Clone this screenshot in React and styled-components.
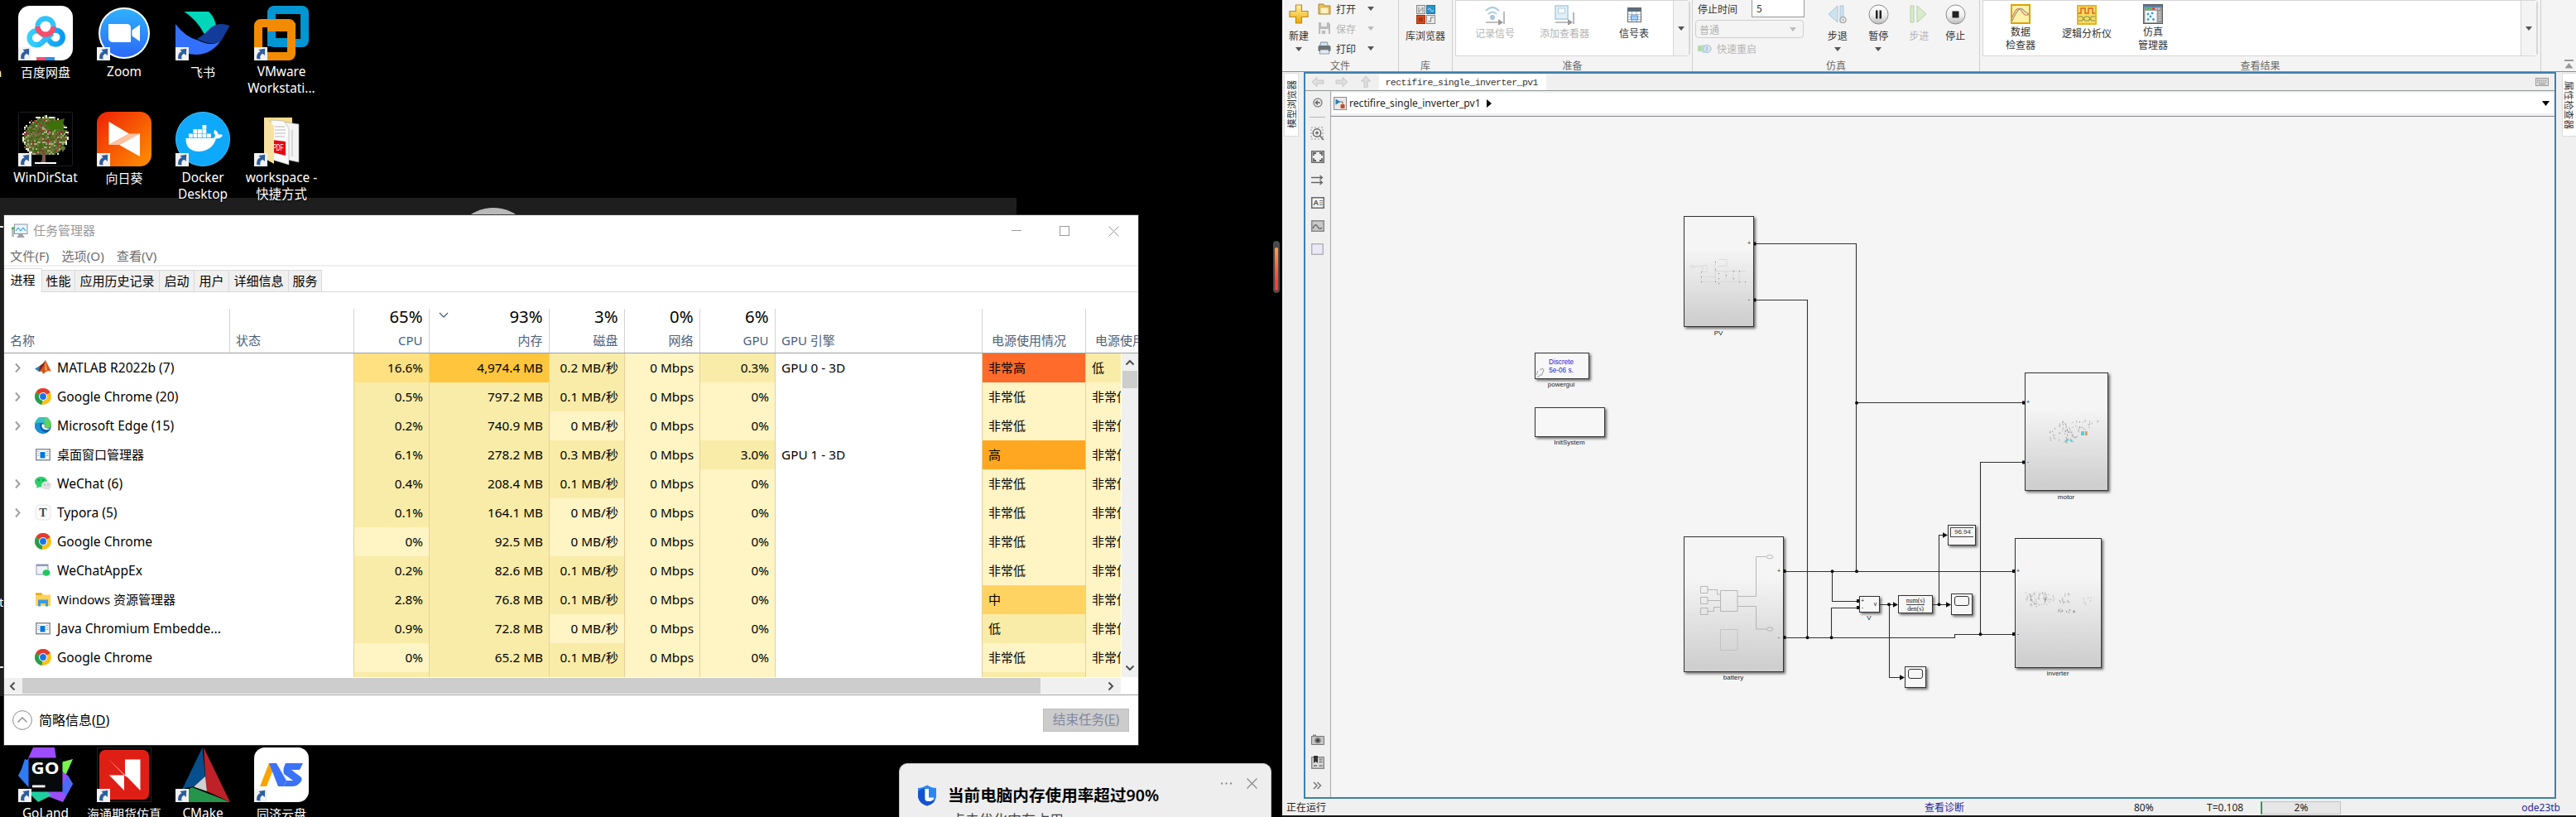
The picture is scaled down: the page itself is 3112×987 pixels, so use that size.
import React from 'react';
import styled, { createGlobalStyle, css } from 'styled-components';

const Global = createGlobalStyle`
  * { box-sizing: border-box; }
  body { margin: 0; background: #000; overflow: hidden; }
  svg { display: block; flex: none; }
`;

const UI = `'Noto Sans', 'Noto Sans CJK SC', sans-serif`;
const CJK = `'Noto Sans CJK SC', 'Noto Sans', sans-serif`;

const Screen = styled.div`
  display: flex;
  width: 3112px;
  height: 987px;
  overflow: hidden;
  font-family: ${UI};
  background: #000;
  white-space: nowrap;
`;

/* ------------------------------ Desktop ------------------------------ */

const Desktop = styled.div`
  position: relative;
  flex: none;
  width: 1549px;
  height: 987px;
  background: #000;
  overflow: hidden;
`;

const Wallpaper = styled.div`
  position: absolute;
  left: 0;
  top: 239px;
  width: 1228px;
  height: 602px;
  overflow: hidden;
  background: #1e1e1e;
`;

const Moon = styled.div`
  position: absolute;
  left: 545px;
  top: 12px;
  width: 102px;
  height: 102px;
  border-radius: 50%;
  background: #b9b9b9;
`;

const Streak = styled.div`
  position: absolute;
  left: 0;
  top: ${(p) => p.$y}px;
  width: 5px;
  height: 2px;
  background: #e8e8e8;
`;

const CutLabel = styled.div`
  position: absolute;
  left: ${(p) => p.$x}px;
  top: ${(p) => p.$y}px;
  font-size: 15px;
  line-height: 20px;
  color: ${(p) => p.$c || '#fff'};
`;

const IconGrid = styled.div`
  position: relative;
  display: grid;
  grid-template-columns: repeat(4, 95px);
  grid-template-rows: 128px 768px 128px;
  padding: 7px 0 0 7.5px;
`;

const Shortcut = styled.div`
  display: flex;
  flex-direction: column;
  align-items: center;
`;

const ShortcutText = styled.div`
  margin-top: 4px;
  font-size: ${(p) => (p.$cjk ? 15 : 15.4)}px;
  line-height: 20px;
  color: #fff;
  text-align: center;
  text-shadow: 0 1px 2px #000;
  white-space: pre;
`;

const Arrow = () => (
  <g>
    <rect x="0" y="50" width="16" height="16" fill="#f2f2f2" />
    <path d="M3.2 64 C3 58.5 4.6 56 7.6 55.2 L5.4 52.9 L13.2 51.7 L12.9 60 L10.4 57.8 C7.6 59 6.8 61 7.6 64.6 Z" fill="#2f5d9e" />
  </g>
);

const Tree = () => {
  const dots = [];
  let s = 7;
  const rnd = () => ((s = (s * 16807) % 2147483647) / 2147483647);
  const colors = ['#5f6a2e', '#3c6b12', '#7b7f45', '#8c3535', '#3c6b12', '#6e6e3a', '#a9a97c', '#5f6a2e'];
  for (let y = 0; y < 24; y++) {
    for (let x = 0; x < 28; x++) {
      const dx = (x - 13.5) / 14;
      const dy = (y - 13) / 13;
      const d = dx * dx + dy * dy;
      if (d < 0.78 || (d < 1.02 && rnd() > 0.35)) {
        dots.push(
          <rect key={`${x}-${y}`} x={5 + x * 2} y={4 + y * 2} width="2" height="2"
            fill={d > 0.84 && rnd() > 0.45 ? '#ecece2' : colors[Math.floor(rnd() * colors.length)]} />
        );
      }
    }
  }
  return (
    <g>
      <rect x="0.5" y="0.5" width="65" height="65" rx="1" fill="#000" stroke="#1d1d1d" />
      <path d="M20 61 h26 v2 h-26z" fill="#fff" />
      <path d="M29 44 h4 v17 h-6 l2-3z" fill="#7a5a50" />
      {dots}
      <path d="M34 14 l22 -6 l-4 14 l-6 -2 l-6 6z" fill="#3c7008" />
    </g>
  );
};

const art = {
  baidu: (
    <g>
      <defs>
        <linearGradient id="bd" x1="0" x2="1"><stop offset="0" stopColor="#35d0ff" /><stop offset="1" stopColor="#0a9bf5" /></linearGradient>
      </defs>
      <rect width="66" height="66" rx="14" fill="#fff" />
      <path d="M28 44.5 a8.5 8.5 0 1 1 0-12.5 l10 10 a8.5 8.5 0 1 0 0-9" transform="translate(0 0.5)" fill="none" stroke="url(#bd)" strokeWidth="6.5" />
      <path d="M28 45 L41 33" stroke="#2bbcfb" strokeWidth="6.5" />
      <path d="M23.5 25 a9.5 9.5 0 0 1 19 0" fill="none" stroke="#31c4fb" strokeWidth="6.4" />
      <path d="M23.5 25 a9.5 9.5 0 0 0 19 0" fill="none" stroke="#fb4d6c" strokeWidth="6.4" />
      <circle cx="33" cy="25" r="6.3" fill="#fff" />
      <rect x="22" y="62" width="11" height="4" fill="#fb4d6c" />
      <rect x="33" y="62" width="11" height="4" fill="#2d8cf0" />
    </g>
  ),
  zoom: (
    <g>
      <defs>
        <linearGradient id="zm" x1="0" x2="0" y1="0" y2="1"><stop offset="0" stopColor="#2fb0fb" /><stop offset="1" stopColor="#2b68f8" /></linearGradient>
      </defs>
      <circle cx="33" cy="33" r="31" fill="#fff" />
      <circle cx="33" cy="33" r="29" fill="url(#zm)" />
      <path d="M14 22 h22 q5 0 5 5 v17 h-21 q-6 0 -6 -6z" fill="#fff" />
      <path d="M42.500 29.500 l9.500 -6.500 v20 l-9.500 -6.500z" fill="#fff" />
    </g>
  ),
  feishu: (
    <g>
      <path d="M10.500 7 H40 q7 6 9 17 l-14 10.500 Q26 17 10.500 7z" fill="#00d6b9" />
      <path d="M0 22 Q12 38 28 42 Q44 50 55 42 Q44 58 26 59 Q10 59 0 50z" fill="#3370ff" />
      <path d="M26 40 Q36 34 42 27 Q52 19 65.500 24 Q60 34 56 41 Q46 50 26 40z" fill="#133c9a" />
    </g>
  ),
  vmware: (
    <g fill="none">
      <rect x="21" y="5" width="40" height="40" rx="3" stroke="#0095d3" strokeWidth="10" />
      <rect x="5" y="21" width="40" height="40" rx="3" stroke="#f38b00" strokeWidth="10" />
      <path d="M21 30 V44 H40" stroke="#0095d3" strokeWidth="10" />
      <path d="M16 26 H45 V32" stroke="#f38b00" strokeWidth="10" />
    </g>
  ),
  tree: <Tree />,
  sunflower: (
    <g>
      <defs>
        <linearGradient id="sf" x1="0" y1="0" x2="1" y2="1"><stop offset="0" stopColor="#ef2006" /><stop offset="1" stopColor="#ff9300" /></linearGradient>
      </defs>
      <rect width="66" height="66" rx="14" fill="url(#sf)" />
      <path d="M14.500 12 L39 26.500 L14.500 40z" fill="#fff" />
      <path d="M52 54 L27 40 L52 26z" fill="#fff" />
      <path d="M14.500 40 L39 26.500 H52 L27 40z" fill="#ffc1a1" />
    </g>
  ),
  docker: (
    <g>
      <circle cx="33" cy="33" r="32.500" fill="#0fa9fb" stroke="#48bdfb" />
      <path d="M12.500 32 H44 q4 0 4-4 q-3-3 -0.500-6 q4 2 4 5.500 q3-1 5.500 1 q-2 4-8 4 Q44 48 28 48 Q12 47 12.500 32z" fill="#fff" />
      <g fill="#fff">
        {[16, 21.5, 27, 32.5, 38].map((x) => <rect key={x} x={x} y="26.500" width="4.800" height="4.800" />)}
        {[21.5, 27, 32.5].map((x) => <rect key={x} x={x} y="21.200" width="4.800" height="4.800" />)}
        <rect x="32.500" y="16" width="4.800" height="4.800" />
      </g>
    </g>
  ),
  folder: (
    <g>
      <path d="M12 7 H46 V50 H12z" fill="#f6dc8c" />
      <path d="M34 12 L54 15 V61 L40 58z" fill="#f4f4f4" stroke="#999" strokeWidth="0.600" />
      <path d="M20 10 L36 11 L42 20 V64 L22 58z" fill="#fafafa" stroke="#aaa" strokeWidth="0.600" />
      <path d="M25 18 h12 M25 22 h13 M25 26 h13 M25 30 h12 M46 22 v32" stroke="#bbb" />
      <path d="M22 34 L38 36 V53 L22 49z" fill="#e50914" />
      <text x="22.500" y="47" fontSize="10.500" fill="#fff" fontFamily="Liberation Sans" textLength="13" lengthAdjust="spacingAndGlyphs">PDF</text>
      <path d="M12 7 L24 17 V63 L12 56z" fill="#f9e2a0" />
    </g>
  ),
  goland: (
    <g>
      <path d="M18 0 L44 0 L46 14 L30 26 L8 22z" fill="#9b4dff" />
      <path d="M8 14 L24 20 L14 50 L0 34 L4 26z" fill="#2d7bf6" />
      <path d="M44 20 L66 14 L58 32 L50 36z" fill="#79f24e" />
      <path d="M52 28 L60 34 L66 44 L54 66 L28 56z" fill="#9a4ff8" />
      <path d="M60 34 L66 44 L58 58 L50 50z" fill="#4b6bf8" />
      <path d="M14 50 L34 52 L40 58 L24 66 L16 58z" fill="#1fd0a0" />
      <rect x="12.500" y="12.500" width="41" height="41" fill="#060a0c" />
      <text x="15.500" y="32" fontSize="19" fontWeight="bold" fill="#fff" fontFamily="Open Sans" textLength="34" lengthAdjust="spacingAndGlyphs">GO</text>
      <rect x="17" y="45.500" width="15.500" height="2.800" fill="#fff" />
    </g>
  ),
  haitong: (
    <g>
      <rect x="0.500" y="0.500" width="65" height="65" fill="#000" stroke="#222" />
      <rect x="3" y="3" width="60" height="60" rx="7" fill="#df1f16" />
      <path d="M14 14 L34 33.500 V14.500 H52.500 V52 L37 36 L33 33.500 V52 L15 33.500 H33z" fill="#fff" />
    </g>
  ),
  cmake: (
    <g>
      <path d="M32.500 0 L36 36 L22 47 L12 49 Q8 52 6 55z" fill="#064f8c" />
      <path d="M34 0 L66 66 L38 53 L36 33z" fill="#be2128" />
      <path d="M20 48 L66 66 H0 V60z" fill="#24954a" />
      <path d="M36 35 L38 53 L22 47.500z" fill="#d0d0d0" />
    </g>
  ),
  tongji: (
    <g>
      <rect width="66" height="66" rx="13" fill="#fff" />
      <path d="M7 47 L18 19 H26 L15 47z" fill="#f9a400" />
      <path d="M18 19 H27 L39 40 L36 47 H29z" fill="#3b73f7" />
      <path d="M36 47 L39 40 H47 L36 32 Q34 27 38 19 H59 L55 27 H45 L57 36 Q59 40 54 44 Q51 47 46 47z" fill="#3b73f7" />
    </g>
  ),
};

const shortcuts = [
  ['baidu', '百度网盘', 1], ['zoom', 'Zoom'], ['feishu', '飞书', 1], ['vmware', 'VMware\nWorkstati...'],
  ['tree', 'WinDirStat'], ['sunflower', '向日葵', 1], ['docker', 'Docker\nDesktop'], ['folder', 'workspace -\n快捷方式'],
  ['goland', 'GoLand'], ['haitong', '海通期货仿真', 1], ['cmake', 'CMake'], ['tongji', '同济云盘', 1],
];

/* --------------------------- Task manager --------------------------- */

const TaskWindow = styled.section`
  position: absolute;
  left: 4px;
  top: 259px;
  width: 1372px;
  height: 642px;
  display: flex;
  flex-direction: column;
  border: 1px solid #3a3638;
  background: #fff;
  color: #000;
`;

const TitleBar = styled.div`
  display: flex;
  align-items: center;
  height: 38px;
  padding-left: 8px;
  color: #999;
  font-size: 15px;
  line-height: 20px;
`;

const TitleText = styled.span`
  flex: 1;
  margin: -2px 0 0 6px;
`;

const WindowButton = styled.div`
  display: grid;
  place-items: center;
  width: ${(p) => p.$w || 58.5}px;
`;

const MenuBar = styled.div`
  display: flex;
  gap: 15px;
  height: 24px;
  padding: 0 0 0 7px;
  border-bottom: 2px solid #f0f0f0;
  font-size: 15.2px;
  line-height: 22px;
  color: #6d6d6d;
`;

const Tabs = styled.div`
  display: flex;
  align-items: flex-end;
  height: 31px;
  border-bottom: 1px solid #d9d9d9;
`;

const Tab = styled.div`
  width: ${(p) => p.$w}px;
  height: 26px;
  border: 1px solid #d9d9d9;
  border-left: 0;
  border-bottom: 0;
  background: #f0f0f0;
  font-size: 15px;
  line-height: 25px;
  text-align: center;
  ${(p) => p.$on && css`
    height: 29px;
    margin-bottom: -1px;
    background: #fff;
    line-height: 27px;
  `}
`;

const colWidths = '273px 150px 91px 145px 91px 91px 91px 250px 125px';

const HeaderRow = styled.div`
  display: grid;
  grid-template-columns: ${colWidths} 63px;
  height: 54px;
  margin-top: 20px;
  border-bottom: 1px solid #a0a0a0;
`;

const HeaderCell = styled.div`
  position: relative;
  display: flex;
  flex-direction: column;
  justify-content: flex-end;
  align-items: ${(p) => (p.$right ? 'flex-end' : 'flex-start')};
  padding: 0 ${(p) => (p.$right ? 7.5 : 0)}px 5px ${(p) => (p.$right ? 0 : p.$pad || 7)}px;
  overflow: hidden;
  border-right: 1px solid #d4d4d4;
  font-size: 15px;
  line-height: 20px;
  color: #4c607a;
  &:last-child { border-right: 0; }
`;

const Total = styled.div`
  margin-bottom: 5px;
  font-size: 20.3px;
  line-height: 27px;
  color: #000;
`;

const SortMark = styled.svg`
  position: absolute;
  left: 11px;
  top: 4px;
`;

const TableArea = styled.div`
  display: flex;
  height: 392px;
`;

const Rows = styled.div`
  width: 1349px;
  height: 391px;
  overflow: hidden;
`;

const Row = styled.div`
  display: grid;
  grid-template-columns: ${colWidths} 42px;
  height: 35px;
`;

const tones = {
  none: '#fff', light: '#fff4c4', mid: '#f9eca8', cpu: '#ffe182', mem: '#ffc53d',
  red: '#ff6b2b', orange: '#ffa720', amber: '#ffd362',
};

const Cell = styled.div`
  display: flex;
  align-items: center;
  justify-content: ${(p) => (p.$right ? 'flex-end' : 'flex-start')};
  padding: 0 ${(p) => (p.$right ? 7 : 0)}px 1px ${(p) => (p.$right ? 0 : 7)}px;
  overflow: hidden;
  background: ${(p) => tones[p.$tone || 'none']};
  border-right: ${(p) => (p.$edge ? '1px solid #e6d09a' : '0')};
  font-size: ${(p) => (p.$cjk ? 15 : 15.3)}px;
  line-height: 20px;
`;

const NameCell = styled(Cell)`
  padding: 0 0 1px 12px;
  font-size: ${(p) => (p.$cjk ? 15 : 15.6)}px;
`;

const Expander = styled.span`
  display: flex;
  width: 25px;
`;

const ProcessIcon = styled.span`
  display: grid;
  place-items: center;
  width: 20px;
  height: 20px;
  margin-right: 7px;
`;

const VScroll = styled.div`
  display: flex;
  flex-direction: column;
  align-items: center;
  justify-content: space-between;
  width: 20px;
  height: 391px;
  margin-left: 1px;
  padding: 7px 0;
  background: #f0f0f0;
`;

const VThumb = styled.div`
  width: 18px;
  height: 21px;
  margin: 6px 0 auto;
  background: #cdcdcd;
`;

const HScroll = styled.div`
  display: flex;
  align-items: center;
  width: 1349px;
  height: 19px;
  padding-left: 6px;
  background: #f0f0f0;
`;

const HThumb = styled.div`
  width: 1230px;
  height: 19px;
  margin: 0 81px 0 8px;
  background: #cdcdcd;
`;

const Footer = styled.div`
  display: flex;
  flex: 1;
  align-items: center;
  margin-top: 1px;
  padding: 0 11px 0 10px;
  border-top: 1px solid #a0a0a0;
  font-size: 16px;
  line-height: 22px;
`;

const FooterText = styled.span`
  flex: 1;
  margin-left: 8px;
  u { text-underline-offset: 2px; }
`;

const EndTask = styled.div`
  width: 104px;
  height: 28px;
  border: 1px solid #bfbfbf;
  background: #ccc;
  color: #8087a0;
  font-size: 15.6px;
  line-height: 25px;
  text-align: center;
`;

const Chrome = () => (
  <svg width="20" height="20" viewBox="0 0 20 20">
    <circle cx="10" cy="10" r="10" fill="#fbc116" />
    <path d="M10 10 L1.300 5 A10 10 0 0 0 8.500 19.900z" fill="#259f4a" />
    <path d="M10 10 L1.300 5 A10 10 0 0 1 18.700 5z" fill="#e33b2e" />
    <circle cx="10" cy="10" r="4.900" fill="#fff" />
    <circle cx="10" cy="10" r="3.900" fill="#1a73e8" />
  </svg>
);

const picto = {
  matlab: (
    <svg width="20" height="20" viewBox="0 0 20 20">
      <path d="M0 11.500 L6 8 L9 10.500 L5 15z" fill="#2f7fb8" />
      <path d="M6 8 Q10 6 13 1 Q12 8 9 14 L5 15z" fill="#7a2a1c" />
      <path d="M13 1 Q15 5 20 15 Q16 12 10 18 Q9 14 6 14 Q11 9 13 1z" fill="#d9541e" />
      <path d="M13 1 L15 14 L12 13z" fill="#f5a04a" />
    </svg>
  ),
  chrome: <Chrome />,
  edge: (
    <svg width="20" height="20" viewBox="0 0 20 20">
      <circle cx="10" cy="10" r="10" fill="#0c59a4" />
      <path d="M0 9 A10 10 0 0 1 20 9 Q20 13 15 13.500 Q11 13 12.500 10.500 Q12 7 8 7 Q3 6 0 9z" fill="#36c2c0" />
      <path d="M12 0.500 A10 10 0 0 1 20 9 Q20 13 15 13.500 Q11 13 12.500 10.500z" fill="#63d455" />
      <path d="M0 10 Q2 6 7.500 6.500 Q5 11 8 15 Q10 18 14 18.500 Q8 22 3 17 Q0 14 0 10z" fill="#1b8fd8" />
      <path d="M8.500 9 Q9.500 7.500 11.500 8.800 Q12.500 10 11.500 12 Q13 14.500 19 13.500 Q17 15.500 13 15.200 Q7.500 13.500 8.500 9z" fill="#fff" />
    </svg>
  ),
  app: (
    <svg width="18" height="15" viewBox="0 0 18 15">
      <rect x="0.750" y="0.750" width="16.500" height="13" fill="#fff" stroke="#8a8d94" strokeWidth="1.500" />
      <rect x="5.500" y="4" width="6" height="7.500" fill="#0078d7" />
      <path d="M2.500 3.500h2M2.500 6h2M2.500 8.500h2M12.500 3.500h3M12.500 6h3M12.500 8.500h3" stroke="#999" strokeWidth="0.900" />
    </svg>
  ),
  wechat: (
    <svg width="20" height="20" viewBox="0 0 20 20">
      <ellipse cx="7.500" cy="8" rx="7.500" ry="6.300" fill="#2bcf6a" />
      <path d="M2 16 l1-4 3 2z" fill="#2bcf6a" />
      <ellipse cx="14" cy="12.500" rx="6" ry="5" fill="#e2e2e2" />
      <path d="M18 18.500 l-0.500-3 -2.500 1.500z" fill="#e2e2e2" />
      <circle cx="5" cy="6" r="0.900" fill="#157a3c" /><circle cx="10" cy="6" r="0.900" fill="#157a3c" />
      <circle cx="12" cy="11.500" r="0.700" fill="#888" /><circle cx="16" cy="11.500" r="0.700" fill="#888" />
    </svg>
  ),
  typora: (
    <svg width="20" height="20" viewBox="0 0 20 20">
      <rect x="1" y="1" width="18" height="18" rx="4" fill="#fbfbfb" stroke="#e6e6e6" />
      <text x="10" y="14.500" textAnchor="middle" fontSize="14" fontWeight="bold" fontFamily="Liberation Serif" fill="#444">T</text>
    </svg>
  ),
  wxapp: (
    <svg width="18" height="16" viewBox="0 0 18 16">
      <rect x="1" y="1" width="14" height="12" fill="#eef2fa" stroke="#8d9bb5" />
      <path d="M1 2h14" stroke="#8d9bb5" strokeWidth="2" />
      <ellipse cx="13" cy="11" rx="4.500" ry="3.800" fill="#1fc763" />
    </svg>
  ),
  explorer: (
    <svg width="20" height="17" viewBox="0 0 20 17">
      <path d="M1 0.500h7l1.500 2H19V16H1z" fill="#ffd35c" />
      <path d="M1 0.500h7l1.500 2H1z" fill="#e3a008" />
      <path d="M4 16.500V8.500h12v8h-3v-3.500H7v3.500z" fill="#3c9be0" />
    </svg>
  ),
};

const processes = [
  ['matlab', 'MATLAB R2022b (7)', 1, '16.6%', '4,974.4 MB', '0.2', '0.3%', 'GPU 0 - 3D', '非常高', '低'],
  ['chrome', 'Google Chrome (20)', 1, '0.5%', '797.2 MB', '0.1', '0%', '', '非常低', '非常低'],
  ['edge', 'Microsoft Edge (15)', 1, '0.2%', '740.9 MB', '0', '0%', '', '非常低', '非常低'],
  ['app', '桌面窗口管理器', 0, '6.1%', '278.2 MB', '0.3', '3.0%', 'GPU 1 - 3D', '高', '非常低'],
  ['wechat', 'WeChat (6)', 1, '0.4%', '208.4 MB', '0.1', '0%', '', '非常低', '非常低'],
  ['typora', 'Typora (5)', 1, '0.1%', '164.1 MB', '0', '0%', '', '非常低', '非常低'],
  ['chrome', 'Google Chrome', 0, '0%', '92.5 MB', '0', '0%', '', '非常低', '非常低'],
  ['wxapp', 'WeChatAppEx', 0, '0.2%', '82.6 MB', '0.1', '0%', '', '非常低', '非常低'],
  ['explorer', 'Windows 资源管理器', 0, '2.8%', '76.8 MB', '0.1', '0%', '', '中', '非常低'],
  ['app', 'Java Chromium Embedde...', 0, '0.9%', '72.8 MB', '0', '0%', '', '低', '非常低'],
  ['chrome', 'Google Chrome', 0, '0%', '65.2 MB', '0.1', '0%', '', '非常低', '非常低'],
];

const powerTone = { 非常高: 'red', 高: 'orange', 中: 'amber', 低: 'mid', 非常低: 'light' };

const Chevron = ({ d, w = 9, h = 13, c = '#a0a0a0', s = 2 }) => (
  <svg width={w} height={h} viewBox={`0 0 ${w} ${h}`}><path d={d} fill="none" stroke={c} strokeWidth={s} /></svg>
);

const ProcessRow = ({ p }) => {
  const [icon, name, group, cpu, mem, disk, gpu, engine, power, trend] = p;
  return (
    <Row>
      <NameCell $cjk={/[^\x20-\x7e]/.test(name)}>
        <Expander>{group ? <Chevron d="M2 1.500 L6.500 6.500 L2 11.500" /> : null}</Expander>
        <ProcessIcon>{picto[icon]}</ProcessIcon>
        {name}
      </NameCell>
      <Cell $edge />
      <Cell $right $edge $tone={cpu === '16.6%' ? 'cpu' : cpu === '0%' ? 'light' : 'mid'}>{cpu}</Cell>
      <Cell $right $edge $tone={mem.length > 9 ? 'mem' : 'mid'}>{mem}</Cell>
      <Cell $right $edge $tone={disk === '0' ? 'light' : 'mid'}>{disk} MB/秒</Cell>
      <Cell $right $edge $tone="light">0 Mbps</Cell>
      <Cell $right $edge $tone={gpu === '0%' ? 'light' : 'mid'}>{gpu}</Cell>
      <Cell $edge>{engine}</Cell>
      <Cell $edge $cjk $tone={powerTone[power]}>{power}</Cell>
      <Cell $cjk $tone={powerTone[trend]}>{trend}</Cell>
    </Row>
  );
};

const TaskManager = () => (
  <TaskWindow>
    <TitleBar>
      <svg width="21" height="18" viewBox="0 0 21 18">
        <path d="M1 4h3v12H1z" fill="#b9bec2" /><path d="M1 5h3v2H1z" fill="#39b54a" />
        <rect x="4.500" y="1" width="15.500" height="11.500" fill="#e7f6ff" stroke="#8b9499" />
        <path d="M6 9l3-4 3 4 3-4 3 4" fill="none" stroke="#1c8bd0" />
        <path d="M10 13h4l3 4H7z" fill="#9da3a7" />
      </svg>
      <TitleText>任务管理器</TitleText>
      <WindowButton><svg width="13" height="12"><path d="M0 5.500h12" stroke="#999" /></svg></WindowButton>
      <WindowButton><svg width="13" height="13"><rect x="0.500" y="0.500" width="11" height="11" fill="none" stroke="#999" /></svg></WindowButton>
      <WindowButton $w={59}><svg width="13" height="13"><path d="M0.500 0.500l12 12M12.500 0.500l-12 12" stroke="#999" /></svg></WindowButton>
    </TitleBar>
    <MenuBar><span>文件(F)</span><span>选项(O)</span><span>查看(V)</span></MenuBar>
    <Tabs>
      <Tab $w={46} $on>进程</Tab><Tab $w={40}>性能</Tab><Tab $w={102}>应用历史记录</Tab><Tab $w={42}>启动</Tab>
      <Tab $w={42}>用户</Tab><Tab $w={72}>详细信息</Tab><Tab $w={40}>服务</Tab>
    </Tabs>
    <HeaderRow>
      <HeaderCell>名称</HeaderCell>
      <HeaderCell>状态</HeaderCell>
      <HeaderCell $right><Total>65%</Total>CPU</HeaderCell>
      <HeaderCell $right>
        <SortMark width="13" height="9"><path d="M1 1l5 5 5-5" fill="none" stroke="#4c607a" strokeWidth="1.300" /></SortMark>
        <Total>93%</Total>内存
      </HeaderCell>
      <HeaderCell $right><Total>3%</Total>磁盘</HeaderCell>
      <HeaderCell $right><Total>0%</Total>网络</HeaderCell>
      <HeaderCell $right><Total>6%</Total>GPU</HeaderCell>
      <HeaderCell>GPU 引擎</HeaderCell>
      <HeaderCell $pad={11}>电源使用情况</HeaderCell>
      <HeaderCell $pad={11}>电源使用情况</HeaderCell>
    </HeaderRow>
    <TableArea>
      <Rows>
        {processes.map((p, i) => <ProcessRow key={i} p={p} />)}
        <Row>
          <Cell /><Cell $edge /><Cell $edge $tone="mid" /><Cell $edge $tone="mid" /><Cell $edge $tone="mid" />
          <Cell $edge $tone="light" /><Cell $edge $tone="light" /><Cell $edge /><Cell $edge $tone="mid" /><Cell $tone="light" />
        </Row>
      </Rows>
      <VScroll>
        <Chevron w={12} h={8} d="M1.500 6.500 L6 2 L10.500 6.500" c="#505050" />
        <VThumb />
        <Chevron w={12} h={8} d="M1.500 1.500 L6 6 L10.500 1.500" c="#505050" />
      </VScroll>
    </TableArea>
    <HScroll>
      <Chevron w={8} h={12} d="M6.500 1.500 L2 6 L6.500 10.500" c="#505050" />
      <HThumb />
      <Chevron w={8} h={12} d="M1.500 1.500 L6 6 L1.500 10.500" c="#505050" />
    </HScroll>
    <Footer>
      <svg width="24" height="24" viewBox="0 0 24 24"><circle cx="12" cy="12" r="11.400" fill="none" stroke="#8a8a8a" /><path d="M6.500 14.500 L12 9 L17.500 14.500" fill="none" stroke="#999" strokeWidth="1.600" /></svg>
      <FooterText>简略信息(<u>D</u>)</FooterText>
      <EndTask>结束任务(<u>E</u>)</EndTask>
    </Footer>
  </TaskWindow>
);

/* ------------------------------ Toast ------------------------------ */

const Toast = styled.aside`
  position: absolute;
  left: 1086px;
  top: 922px;
  width: 450px;
  height: 120px;
  display: flex;
  align-items: flex-start;
  padding: 0 16px 0 21px;
  border: 1px solid #c8c8c8;
  border-radius: 10px;
  background: #eee;
`;

const Shield = styled.svg`
  margin-top: 25px;
`;

const ToastBody = styled.div`
  flex: 1;
  margin: 24px 0 0 13px;
`;

const ToastTitle = styled.div`
  font-size: 19.6px;
  font-weight: 600;
  line-height: 28px;
  color: #000;
`;

const ToastText = styled.div`
  margin: 4px 0 0 4px;
  font-size: 17px;
  line-height: 24px;
  color: #444;
`;

const ToastTools = styled.div`
  display: flex;
  gap: 18px;
  align-items: center;
  margin-top: 17px;
`;

const SideHandle = styled.div`
  position: absolute;
  left: 1538px;
  top: 291px;
  width: 8px;
  height: 63px;
  padding: 8px 2px 3px;
  border-radius: 4px;
  background: #4a4a4a;
  &::before {
    content: '';
    display: block;
    height: 100%;
    border-radius: 2px;
    background: linear-gradient(#ff9f4c, #ff3c35 80%);
  }
`;

/* ------------------------------ Simulink ------------------------------ */

const Simulink = styled.div`
  display: flex;
  flex-direction: column;
  width: 1563px;
  height: 987px;
  background: #f0f0f0;
  font-family: ${CJK};
  font-size: 12px;
  color: #333;
`;

const Ribbon = styled.div`
  display: flex;
  height: 87px;
  border-bottom: 1px solid #8f8f8f;
  background: #f4f4f4;
`;

const Section = styled.div`
  display: flex;
  flex-direction: column;
  width: ${(p) => p.$w}px;
  border-right: 1px solid #cfcfcf;
`;

const SectionBody = styled.div`
  display: flex;
  height: 70px;
`;

const SectionLabel = styled.div`
  height: 16px;
  line-height: 17px;
  text-align: center;
  color: #6a6a6a;
`;

const BigButton = styled.div`
  display: flex;
  flex-direction: column;
  align-items: center;
  width: ${(p) => p.$w}px;
  padding-top: 4px;
  color: ${(p) => (p.$off ? '#b4b4b4' : '#333')};
`;

const BigIcon = styled.div`
  display: grid;
  place-items: center;
  height: 26px;
  margin-bottom: ${(p) => p.$gap ?? 5}px;
`;

const BigText = styled.div`
  line-height: 16px;
  margin-bottom: 6px;
  text-align: center;
  white-space: pre;
`;

const SmallList = styled.div`
  display: flex;
  flex-direction: column;
  margin-top: -2px;
`;

const SmallRow = styled.div`
  display: flex;
  align-items: center;
  height: 24.3px;
  padding-left: 3px;
  color: ${(p) => (p.$off ? '#b4b4b4' : '#333')};
`;

const SmallText = styled.span`
  width: ${(p) => p.$w || 38}px;
  margin-left: 6px;
`;

const Gallery = styled.div`
  display: flex;
  width: ${(p) => p.$w}px;
  height: 68px;
  margin: 0 0 0 3px;
  border: 1px solid #d6d6d6;
  border-width: 1px 2px 1px 1px;
  border-radius: 0 5px 5px 0;
  background: #fff;
`;

const GalleryItems = styled.div`
  display: flex;
  flex: 1;
  padding-left: 5px;
`;

const GalleryMore = styled.div`
  display: grid;
  place-items: center;
  width: 19px;
  border-left: 1px solid #d6d6d6;
  background: #f4f4f4;
`;

const SimForm = styled.div`
  display: flex;
  flex-direction: column;
  width: 150px;
`;

const FormRow = styled.div`
  display: flex;
  align-items: center;
  height: 21px;
  padding-left: 6px;
  color: ${(p) => (p.$off ? '#b4b4b4' : '#333')};
`;

const Field = styled.div`
  width: 64px;
  height: 21px;
  margin-left: 17px;
  padding-left: 5px;
  border: 1px solid #999;
  border-top: 0;
  background: #fff;
  line-height: 20px;
`;

const Select = styled.div`
  display: flex;
  align-items: center;
  justify-content: space-between;
  width: 131px;
  height: 22px;
  margin: 3px 0 2px 3px;
  padding: 0 8px 0 4px;
  border: 1px solid #cfcfcf;
  border-radius: 4px;
  color: #b4b4b4;
`;

const CollapseSlot = styled.div`
  display: flex;
  flex: 1;
  align-items: flex-end;
  justify-content: flex-end;
  padding: 0 3px 3px 0;
`;

const Main = styled.div`
  display: flex;
  height: 879px;
`;

const Rail = styled.div`
  display: flex;
  width: ${(p) => p.$w}px;
  padding: 1px 0 0 ${(p) => p.$pl}px;
`;

const RailTab = styled.div`
  display: grid;
  place-items: center;
  flex: none;
  width: 18px;
  height: 77px;
  border: 1px solid #dcdcdc;
  background: #fff;
  writing-mode: vertical-rl;
  text-orientation: sideways;
  font-size: 11.6px;
  line-height: 16px;
  transform: ${(p) => (p.$flip ? 'rotate(180deg)' : 'none')};
`;

const Editor = styled.div`
  display: flex;
  flex-direction: column;
  width: 1513px;
  height: 878px;
  border: 2px solid #3f80ad;
`;

const TabStrip = styled.div`
  display: flex;
  align-items: center;
  height: 21px;
  border-bottom: 1px solid #8e9693;
`;

const NavIcons = styled.div`
  display: flex;
  gap: 13px;
  width: 89px;
  padding-left: 7px;
`;

const ModelTab = styled.div`
  width: 202px;
  height: 20px;
  padding-left: 7.5px;
  background: #fff;
  font-family: 'Liberation Mono', monospace;
  font-size: 11.5px;
  letter-spacing: -0.54px;
  line-height: 21px;
  color: #333;
`;

const TabStripEnd = styled.div`
  margin: 0 7px 0 auto;
`;

const EditorBody = styled.div`
  display: flex;
  flex: 1;
`;

const Palette = styled.div`
  display: flex;
  flex-direction: column;
  align-items: center;
  width: 31px;
  padding: 0 1px 0 0;
  border-right: 1px solid #a9a9a9;
`;

const Tool = styled.div`
  display: grid;
  place-items: center;
  width: 28px;
  height: 28px;
`;

const ToolRule = styled.div`
  width: 19px;
  height: 1px;
  margin: 3px 0 5px;
  background: #b5b5b5;
`;

const Spacer = styled.div`
  flex: 1;
`;

const Work = styled.div`
  display: flex;
  flex: 1;
  flex-direction: column;
`;

const AddressBar = styled.div`
  display: flex;
  align-items: center;
  gap: 3px;
  height: 30px;
  padding: 0 4px 0 2px;
  border: solid #f0f0f0;
  border-width: 2px 2px 3px 1px;
  background: #fff;
  font-family: ${UI};
  font-size: 12.1px;
  line-height: 16px;
  color: #222;
`;

const AddressRule = styled.div`
  height: 1px;
  background: #85888f;
`;

const AddressName = styled.span`
  margin-right: 4px;
`;

const Canvas = styled.div`
  position: relative;
  flex: 1;
  overflow: hidden;
  background: #f5f5f5;
`;

const CX = 1608;
const CY = 141;

const Node = styled.div`
  position: absolute;
  left: ${(p) => p.$x - CX}px;
  top: ${(p) => p.$y - CY}px;
  width: ${(p) => p.$w}px;
  height: ${(p) => p.$h}px;
  border: 1px solid #333;
  background: ${(p) => (p.$shade ? 'linear-gradient(#f5f5f5 30%, #cfcfcf 95%)' : '#f7f7f7')};
  box-shadow: 2px 2px 3px rgba(0, 0, 0, 0.55);
`;

const NodeLabel = styled.div`
  position: absolute;
  left: ${(p) => p.$x - CX - 40}px;
  top: ${(p) => p.$y - CY - 6}px;
  width: 80px;
  font-family: 'Liberation Sans', sans-serif;
  font-size: 8px;
  line-height: 12px;
  text-align: center;
  color: #222;
`;

const PowerText = styled.div`
  padding: 6px 2px 0 0;
  font-family: 'Liberation Sans', sans-serif;
  font-size: 8.2px;
  line-height: 9.5px;
  text-align: center;
  color: #2a20d8;
`;

const Fraction = styled.div`
  display: flex;
  flex-direction: column;
  align-items: center;
  padding-top: 1px;
  font-family: 'Liberation Serif', serif;
  font-size: 7.9px;
  line-height: 9px;
  color: #222;
  span:first-child { border-bottom: 1px solid #444; }
`;

const Readout = styled.div`
  width: 28px;
  height: 12px;
  margin: 2px 0 0 2px;
  padding-right: 3px;
  border: 1px solid #444;
  border-right: 0;
  font-family: 'Liberation Sans', sans-serif;
  font-size: 8px;
  line-height: 10px;
  text-align: right;
  color: #333;
`;

const ScopeScreen = styled.div`
  width: 18px;
  height: 12px;
  margin: 2px auto 0;
  border: 1px solid #333;
  border-radius: 3px;
`;

const PortText = styled.div`
  position: absolute;
  left: ${(p) => p.$x - CX - 5}px;
  top: ${(p) => p.$y - CY - 5}px;
  width: 10px;
  font-family: 'Liberation Sans', sans-serif;
  font-size: 7px;
  line-height: 10px;
  text-align: center;
  color: #222;
`;

const Wires = styled.svg`
  position: absolute;
  left: 0;
  top: 0;
`;

const StatusBar = styled.div`
  display: flex;
  align-items: center;
  height: 19px;
  padding: 0 19px 0 5px;
  font-family: ${UI};
  line-height: 16px;
  color: #222;
`;

const StatusItem = styled.span`
  width: ${(p) => p.$w}px;
  color: ${(p) => (p.$link ? '#2a2a9e' : '#222')};
  text-align: ${(p) => (p.$end ? 'right' : 'left')};
`;

const Progress = styled.div`
  width: 97px;
  height: 16px;
  border: 1px solid #c4c4c4;
  border-left: 2px solid #25a244;
  background: #e6e6e6;
  line-height: 14px;
  text-align: center;
`;

const BottomEdge = styled.div`
  height: 2px;
  background: #1b1718;
`;

const Down = ({ c = '#555', w = 8 }) => (
  <svg width={w} height="5" viewBox="0 0 8 5"><path d="M0 0h8L4 5z" fill={c} /></svg>
);

const speckles = (seed, n, x0, y0, w, h, o) => {
  let s = seed;
  const rnd = () => ((s = (s * 16807) % 2147483647) / 2147483647);
  return Array.from({ length: n }, (_, i) => (
    <rect key={`${seed}-${i}`} x={x0 + rnd() * w} y={y0 + rnd() * h} width="1" height={1 + rnd() * 1.5} fill="#555" opacity={o} />
  ));
};

const dots = [[2243, 486.5], [2213.5, 690], [2243, 690], [2183.5, 770], [2212.5, 770], [2392.5, 766], [2282, 730], [2342.5, 730]];
const ports = [[2120, 294.5], [2120, 362.5], [2444.5, 486.5], [2444.5, 558.5], [2156, 690], [2156, 770], [2432.5, 690], [2432.5, 766], [2244.5, 726], [2244.5, 734]];
const heads = [[2293, 730], [2357, 730], [2353, 646], [2301, 818]];

const Diagram = () => (
  <Canvas>
    <Node $x={2034} $y={261} $w={85} $h={134} $shade />
    <Node $x={2446} $y={450} $w={101} $h={143} $shade />
    <Node $x={2034} $y={648} $w={121} $h={164} $shade />
    <Node $x={2434} $y={650} $w={105} $h={157} $shade />
    <Node $x={1854} $y={426} $w={66} $h={32}><PowerText>Discrete<br />5e-06 s.</PowerText></Node>
    <Node $x={1854} $y={492} $w={85} $h={36} />
    <Node $x={2246} $y={720} $w={25} $h={20} />
    <Node $x={2293} $y={719} $w={42} $h={22}><Fraction><span>num(s)</span><span>den(s)</span></Fraction></Node>
    <Node $x={2353} $y={634} $w={34} $h={25}><Readout>96.94</Readout></Node>
    <Node $x={2357} $y={717} $w={26} $h={26}><ScopeScreen /></Node>
    <Node $x={2301} $y={805} $w={26} $h={26}><ScopeScreen /></Node>
    <Wires width="1478" height="823" viewBox="1608 141 1478 823">
      <g fill="none" stroke="#333" strokeWidth="1.100">
        <path d="M2119 294.500H2242.500V690" />
        <path d="M2119 362.500H2183.500V770" />
        <path d="M2242.500 486.500H2446M2446 558.500H2392.500V766" />
        <path d="M2155 690.500H2434M2155 770.500H2361.500V766.500H2434" />
        <path d="M2213.500 690V726.500H2246M2212.500 770V734.500H2246" />
        <path d="M2271 730.500H2290M2335 730.500H2352M2342.500 730V646.500H2350M2282.500 730V818.500H2297" />
      </g>
      <g fill="#111">
        {dots.map(([x, y]) => <circle key={`${x},${y}`} cx={x} cy={y + 0.3} r="2" />)}
        {ports.map(([x, y]) => <rect key={`${x},${y}`} x={x - 1.5} y={y - 2} width="3" height="4" />)}
        {heads.map(([x, y]) => <path key={`${x},${y}`} d={`M${x} ${y + 0.5}l-6-3.200v6.400z`} />)}
      </g>
      <g fill="none" stroke="#a8a8a8" strokeWidth="0.800">
        <path d="M2054.500 708.500h8.500v8h-8.500zM2054.500 721.500h8.500v8h-8.500zM2054.500 734.500h8.500v8h-8.500zM2078.500 713.500h20.500v25h-20.500z" />
        <path d="M2063 712.500h11.500v5.500h4M2063 725.500h15.500M2063 738.500h7.500v-5h8M2099 720.500h22.500v-48h12M2099 732.500h22.500v27.500h12" />
        <ellipse cx="2138" cy="672.700" rx="4" ry="2.200" /><ellipse cx="2138" cy="760" rx="4" ry="2.200" />
        <path d="M2078.500 760.500h20.500v25h-20.500z" stroke="#bcbcbc" />
      </g>
      <g fill="none" stroke="#d6d6d6" strokeWidth="0.800">
        <path d="M2042 320.500h4v3h-4zM2046 322h11M2057 320.500h5v8h-5zM2076 313.500h10v8h-10M2072 316v25M2055 328v12.500h53M2055 334.500h18M2072 327.500h37M2085 327v13M2094 327v13M2101 327v13" />
      </g>
      {[[2055, 328], [2055, 334], [2055, 340], [2072, 316], [2072, 325], [2072, 340], [2076, 330], [2076, 336], [2085, 332], [2094, 327], [2094, 336], [2101, 327], [2101, 340], [2108, 340], [2076, 342]].map(([x, y], i) => (
        <rect key={i} x={x} y={y} width="1" height="1.200" fill="#888" />
      ))}
      {speckles(11, 24, 2476, 512, 22, 22, 0.4)}
      {speckles(17, 30, 2488, 508, 30, 14, 0.4)}
      {speckles(23, 20, 2495, 520, 14, 14, 0.4)}
      {speckles(29, 12, 2517, 507, 18, 12, 0.35)}
      {speckles(31, 60, 2447, 714, 26, 18, 0.35)}
      {speckles(41, 30, 2470, 716, 30, 12, 0.35)}
      {speckles(43, 18, 2486, 735, 26, 4, 0.45)}
      {speckles(47, 6, 2517, 721, 9, 8, 0.3)}
      <g fill="#4bd3d6"><rect x="2514" y="521" width="4" height="5" /><rect x="2495" y="531" width="2.500" height="2.500" /><rect x="2501" y="531" width="2.500" height="2.500" /></g>
      <rect x="2519" y="521" width="2.500" height="5" fill="#ee9040" />
      <path d="M1856 453l2-5M1860 447q4-3 5 0l-3 7M1857 455q3 1 4-3" stroke="#888" fill="none" strokeWidth="0.900" />
    </Wires>
    <PortText $x={2113} $y={294}>+</PortText><PortText $x={2113} $y={362}>-</PortText>
    <PortText $x={2450} $y={486}>+</PortText><PortText $x={2450} $y={558}>-</PortText>
    <PortText $x={2149} $y={690}>+</PortText><PortText $x={2149} $y={770}>-</PortText>
    <PortText $x={2438} $y={690}>+</PortText><PortText $x={2438} $y={766}>-</PortText>
    <PortText $x={2250} $y={726}>+</PortText><PortText $x={2250} $y={734}>-</PortText>
    <PortText $x={2265.5} $y={730}>v</PortText>
    <NodeLabel $x={2076} $y={402.5}>PV</NodeLabel>
    <NodeLabel $x={1886} $y={465}>powergui</NodeLabel>
    <NodeLabel $x={1896} $y={535}>InitSystem</NodeLabel>
    <NodeLabel $x={2496} $y={601}>motor</NodeLabel>
    <NodeLabel $x={2094} $y={819}>battery</NodeLabel>
    <NodeLabel $x={2486} $y={813.5}>inverter</NodeLabel>
    <NodeLabel $x={2258} $y={747}>V</NodeLabel>
  </Canvas>
);

const GrayArrow = ({ r }) => (
  <svg width="16" height="14" viewBox="0 0 16 14">
    <path d="M1 7l6-5.500v3.500h8v4H7v3.500z" transform={`rotate(${r} 8 7)`} fill="#dedede" stroke="#c6c6c6" />
  </svg>
);

const stroke = { fill: 'none', stroke: '#666', strokeWidth: 1.5 };

const RibbonBar = () => (
  <Ribbon>
    <Section $w={141}>
      <SectionBody>
        <BigButton $w={40}>
          <BigIcon>
            <svg width="24" height="24" viewBox="0 0 24 24">
              <defs><linearGradient id="pl" x1="0" x2="0" y1="0" y2="1"><stop offset="0" stopColor="#fdf3a4" /><stop offset="1" stopColor="#f0a800" /></linearGradient></defs>
              <path d="M8.500 1h7v7.500H23v7h-7.500V23h-7v-7.500H1v-7h7.500z" fill="url(#pl)" stroke="#b98a2c" strokeWidth="1.200" />
            </svg>
          </BigIcon>
          <BigText>新建</BigText>
          <Down />
        </BigButton>
        <SmallList>
          <SmallRow>
            <svg width="16" height="15" viewBox="0 0 16 15"><path d="M1 2h6l1 2h7v10H1z" fill="#e8c25a" stroke="#a98638" /><path d="M3 6h10v7.500H3z" fill="#fdf3c0" stroke="#c7a652" strokeWidth="0.700" /></svg>
            <SmallText>打开</SmallText><Down />
          </SmallRow>
          <SmallRow $off>
            <svg width="16" height="16" viewBox="0 0 16 16"><path d="M1 1h12l2 2v12H1z" fill="#bbb" /><path d="M4 1h7v5H4zM3 9h10v6H3z" fill="#eee" /><path d="M5 11h4v4H5z" fill="#bbb" /></svg>
            <SmallText>保存</SmallText><Down c="#bbb" />
          </SmallRow>
          <SmallRow>
            <svg width="16" height="16" viewBox="0 0 16 16"><path d="M3.500 1h8l1 5h-10z" fill="#cfe4f5" stroke="#6c7a86" strokeWidth="0.800" /><rect x="0.500" y="5" width="15" height="7" rx="1.500" fill="#6e7377" /><path d="M3 10h10l1 5H2z" fill="#dfeaf3" stroke="#778" strokeWidth="0.700" /></svg>
            <SmallText>打印</SmallText><Down />
          </SmallRow>
        </SmallList>
      </SectionBody>
      <SectionLabel>文件</SectionLabel>
    </Section>
    <Section $w={65}>
      <SectionBody>
        <BigButton $w={65}>
          <BigIcon>
            <svg width="23" height="23" viewBox="0 0 23 23">
              <rect x="0.500" y="0.500" width="10" height="10" fill="#e0e0e0" stroke="#888" /><path d="M3 3v6l5-6v6" stroke="#888" fill="none" />
              <rect x="12.500" y="0.500" width="10" height="10" fill="#2b93cb" stroke="#1c76a9" /><path d="M14 6q2-4 3.500 0t3.500 0" stroke="#bfe4f7" fill="none" />
              <rect x="0.500" y="12.500" width="10" height="10" fill="#d1491c" stroke="#a33510" /><rect x="4" y="16" width="3" height="3" fill="none" stroke="#7a2306" />
              <rect x="12.500" y="12.500" width="10" height="10" fill="#ececec" stroke="#888" /><path d="M14.500 20h3v-5h3.500" stroke="#777" fill="none" />
            </svg>
          </BigIcon>
          <BigText>库浏览器</BigText>
        </BigButton>
      </SectionBody>
      <SectionLabel>库</SectionLabel>
    </Section>
    <Section $w={290}>
      <SectionBody>
        <Gallery $w={284}>
          <GalleryItems>
            <BigButton $w={84} $off>
              <BigIcon $gap={1}>
                <svg width="24" height="24" viewBox="0 0 24 24"><g fill="none" stroke="#a9cbe0" strokeWidth="1.800"><path d="M1 7q8-8 16 0M4 11q5-5 10 0" /></g><circle cx="9" cy="15" r="3" fill="#a9c4dd" /><path d="M1 21h18M23 8v15" stroke="#a9a9a9" strokeWidth="1.600" /><path d="M16 17l6 4-6 4z" fill="#999" /></svg>
              </BigIcon>
              <BigText>记录信号</BigText>
            </BigButton>
            <BigButton $w={84} $off>
              <BigIcon $gap={1}>
                <svg width="24" height="24" viewBox="0 0 24 24"><rect x="1" y="1" width="15" height="16" fill="#e4f0f8" stroke="#a9cbe0" strokeWidth="1.500" /><rect x="4.500" y="4" width="8" height="6" fill="#fff" stroke="#a9cbe0" /><path d="M1 21h18M23 9v14" stroke="#a9a9a9" strokeWidth="1.600" /><path d="M16 17l6 4-6 4z" fill="#999" /></svg>
              </BigIcon>
              <BigText>添加查看器</BigText>
            </BigButton>
            <BigButton $w={84}>
              <BigIcon $gap={1}>
                <svg width="17" height="18" viewBox="0 0 17 18"><rect x="0.500" y="0.500" width="16" height="17" fill="#fff" stroke="#666" /><rect x="1" y="1" width="15" height="4" fill="#5a6d80" /><path d="M1 8.500h15M1 11.500h15M1 14.500h15M5.500 5v12M11 5v12" stroke="#9ab" strokeWidth="0.800" /><rect x="4.500" y="10" width="8" height="5" fill="#9fd0ff" stroke="#4a90d9" /></svg>
              </BigIcon>
              <BigText>信号表</BigText>
            </BigButton>
          </GalleryItems>
          <GalleryMore><Down /></GalleryMore>
        </Gallery>
      </SectionBody>
      <SectionLabel>准备</SectionLabel>
    </Section>
    <Section $w={347}>
      <SectionBody>
        <SimForm>
          <FormRow>停止时间<Field>5</Field></FormRow>
          <Select>普通<Down c="#bbb" /></Select>
          <FormRow $off>
            <svg width="17" height="14" viewBox="0 0 17 14"><rect x="0" y="3" width="5" height="7" fill="#b5dba5" /><path d="M5 2h4v10H5z" fill="#c4d9e6" /><circle cx="11.500" cy="7" r="4.700" fill="#d5e6f0" stroke="#a8c2d3" /><path d="M11 4v6" stroke="#8fb0c4" /></svg>
            <SmallText $w={50}>快速重启</SmallText>
          </FormRow>
        </SimForm>
        <BigButton $w={49.5}>
          <BigIcon>
            <svg width="24" height="24" viewBox="0 0 24 24"><path d="M12 2v20L1 12z" fill="#cfe3ef" stroke="#a9c5d6" /><path d="M15 2h4v20h-4z" fill="#cfe3ef" stroke="#a9c5d6" /><circle cx="18.500" cy="19" r="3.500" fill="#eee" stroke="#aaa" strokeWidth="1.500" /><circle cx="18.500" cy="19" r="1" fill="#999" /></svg>
          </BigIcon>
          <BigText>步退</BigText><Down />
        </BigButton>
        <BigButton $w={49.5}>
          <BigIcon>
            <svg width="25" height="25" viewBox="0 0 25 25">
              <defs><linearGradient id="rb" x1="0" x2="0" y1="0" y2="1"><stop offset="0" stopColor="#fff" /><stop offset="0.550" stopColor="#eee" /><stop offset="1" stopColor="#bbb" /></linearGradient></defs>
              <circle cx="12.500" cy="12.500" r="11.500" fill="url(#rb)" stroke="#8b8b8b" /><path d="M9 7.500h2.500v10H9zM13.500 7.500H16v10h-2.500z" fill="#222" />
            </svg>
          </BigIcon>
          <BigText>暂停</BigText><Down />
        </BigButton>
        <BigButton $w={48.5} $off>
          <BigIcon>
            <svg width="22" height="24" viewBox="0 0 22 24"><path d="M1 2h4v20H1z" fill="#d7ecca" stroke="#b4cfa5" /><path d="M9 2v20l11-10z" fill="#d7ecca" stroke="#b4cfa5" /></svg>
          </BigIcon>
          <BigText>步进</BigText>
        </BigButton>
        <BigButton $w={39.5}>
          <BigIcon>
            <svg width="25" height="25" viewBox="0 0 25 25"><circle cx="12.500" cy="12.500" r="11.500" fill="url(#rb)" stroke="#8b8b8b" /><path d="M8.500 8.500h8v8h-8z" fill="#222" /></svg>
          </BigIcon>
          <BigText>停止</BigText>
        </BigButton>
      </SectionBody>
      <SectionLabel>仿真</SectionLabel>
    </Section>
    <Section $w={678}>
      <SectionBody>
        <Gallery $w={671}>
          <GalleryItems>
            <BigButton $w={80}>
              <BigIcon $gap={1}>
                <svg width="24" height="24" viewBox="0 0 24 24"><rect x="1" y="1" width="22" height="22" fill="#fdf0a8" stroke="#dda300" strokeWidth="2" /><path d="M2 16q6-16 11-8t9 4" fill="none" stroke="#e08060" strokeWidth="1.300" /><path d="M2 20q8-18 12-14t8 6" fill="none" stroke="#8fa890" strokeWidth="1.200" /></svg>
              </BigIcon>
              <BigText>{'数据\n检查器'}</BigText>
            </BigButton>
            <BigButton $w={80}>
              <BigIcon $gap={1}>
                <svg width="24" height="24" viewBox="0 0 24 24"><rect x="1" y="1" width="22" height="22" fill="#fbdc5a" stroke="#e6b422" strokeWidth="2" /><path d="M2 10h3V4h5v6h4V4h5v6h3" fill="none" stroke="#d8602c" strokeWidth="1.400" /><path d="M2 14h4l4 5h4l4-5h4M2 19h4l4-5h4l4 5h4" fill="none" stroke="#7d8f5a" strokeWidth="1.200" /></svg>
              </BigIcon>
              <BigText>逻辑分析仪</BigText>
            </BigButton>
            <BigButton $w={80}>
              <BigIcon $gap={1}>
                <svg width="24" height="24" viewBox="0 0 24 24"><rect x="0.500" y="0.500" width="23" height="23" fill="#9a9a9a" stroke="#5c5c5c" /><rect x="1" y="1" width="22" height="2.500" fill="#4d78a8" /><path d="M2 5.500h8" stroke="#2ecc55" strokeWidth="2" strokeDasharray="2 1" /><path d="M11 5.500h3" stroke="#e33" strokeWidth="2" /><path d="M15 5.500h6" stroke="#ccc" strokeWidth="2" strokeDasharray="2 1" /><rect x="2.500" y="8" width="14" height="14" fill="#fff" /><g fill="#2e9be0"><circle cx="6" cy="12" r="1.400" /><circle cx="11" cy="11" r="1.400" /><circle cx="9" cy="15" r="1.400" /><circle cx="6" cy="18.500" r="1.400" /><circle cx="12.500" cy="18.500" r="1.400" /></g><path d="M18.500 10h3M18.500 13h3M18.500 16h3M18.500 19h3" stroke="#eee" /></svg>
              </BigIcon>
              <BigText>{'仿真\n管理器'}</BigText>
            </BigButton>
          </GalleryItems>
          <GalleryMore><Down /></GalleryMore>
        </Gallery>
      </SectionBody>
      <SectionLabel>查看结果</SectionLabel>
    </Section>
    <CollapseSlot>
      <svg width="11" height="11" viewBox="0 0 11 11"><path d="M0 0h11v2H0zM5.500 4l5 6.500h-10z" fill="#999" /></svg>
    </CollapseSlot>
  </Ribbon>
);

const PaletteBar = () => (
  <Palette>
    <Tool><svg width="12" height="12" viewBox="0 0 12 12"><circle cx="6" cy="6" r="5" {...stroke} stroke="#888" /><path d="M9 6H3.500M6 3.500L3.500 6 6 8.500" {...stroke} strokeWidth="1.600" /></svg></Tool>
    <ToolRule />
    <Tool><svg width="17" height="17" viewBox="0 0 17 17"><path d="M1 1h14v14H1z" fill="none" stroke="#999" strokeDasharray="2 2" /><circle cx="8" cy="7.500" r="4.700" {...stroke} /><path d="M8 5.500v4M6 7.500h4M11.500 11l4.500 5" {...stroke} /></svg></Tool>
    <Tool><svg width="16" height="15" viewBox="0 0 16 15"><rect x="0.750" y="0.750" width="14.500" height="13.500" {...stroke} /><path d="M3 6V3h3M10 3h3v3M13 9v3h-3M6 12H3V9" {...stroke} strokeWidth="1.800" /></svg></Tool>
    <Tool><svg width="16" height="13" viewBox="0 0 16 13"><path d="M0 3.500h13M0 9.500h13M10.500 1l3 2.500-3 2.500M10.500 7l3 2.500-3 2.500" {...stroke} strokeWidth="1.300" /></svg></Tool>
    <Tool><svg width="16" height="14" viewBox="0 0 16 14"><rect x="0.750" y="0.750" width="14.500" height="12.500" {...stroke} fill="#f6f6f6" /><text x="2.500" y="10.300" fontSize="9" fontWeight="bold" fontFamily="Liberation Sans" fill="#444">A</text><path d="M10 4.500h4M10 7h4M10 9.500h4" stroke="#777" /></svg></Tool>
    <Tool><svg width="16" height="14" viewBox="0 0 16 14"><rect x="0.750" y="0.750" width="14.500" height="12.500" fill="#c9c9c9" stroke="#888" strokeWidth="1.500" /><path d="M2 10q3-7 5.500-2.500t5.500 1.500" {...stroke} /></svg></Tool>
    <Tool><svg width="15" height="14" viewBox="0 0 15 14"><rect x="0.750" y="0.750" width="13.500" height="12.500" fill="#eae9f7" stroke="#a5a5ac" strokeWidth="1.200" /></svg></Tool>
    <Spacer />
    <Tool><svg width="16" height="13" viewBox="0 0 16 13"><path d="M0.500 2.500h15v10H0.500z" fill="#c4c4c4" stroke="#777" /><path d="M2 0.500h4v2H2z" fill="#888" /><circle cx="8" cy="7.500" r="3.600" fill="#777" /><circle cx="8" cy="7.500" r="1.600" fill="#333" /></svg></Tool>
    <Tool><svg width="16" height="16" viewBox="0 0 16 16"><rect x="0.750" y="1.750" width="14.500" height="13.500" fill="#ddd" stroke="#888" strokeWidth="1.500" /><path d="M3 0h5v9l-2.500-2L3 9z" fill="#333" /><path d="M9.500 4.500h4M9.500 7.500h4M3 12h4M9.500 12h4" stroke="#888" strokeWidth="2" /></svg></Tool>
    <Tool><svg width="11" height="10" viewBox="0 0 11 10"><path d="M1 1l4 4-4 4M5.500 1l4 4-4 4" {...stroke} stroke="#777" /></svg></Tool>
  </Palette>
);

export default function App() {
  return (
    <Screen>
      <Global />
      <Desktop>
        <Wallpaper><Moon /><Streak $y={34} /><Streak $y={566} /></Wallpaper>
        <IconGrid>
          {shortcuts.map(([id, label, cjk]) => (
            <Shortcut key={id}>
              <svg width="66" height="66" viewBox="0 0 66 66">{art[id]}<Arrow /></svg>
              <ShortcutText $cjk={cjk}>{label}</ShortcutText>
            </Shortcut>
          ))}
        </IconGrid>
        <CutLabel $x={-7} $y={77}>n</CutLabel>
        <CutLabel $x={-1} $y={717}>t</CutLabel>
        <TaskManager />
        <Toast>
          <Shield width="24" height="26" viewBox="0 0 24 26">
            <path d="M12 0.500q6 3.500 11 3.500v11q-2 8-11 10.500Q3 23 1 15V4q5 0 11-3.500z" fill="#2a86f5" />
            <path d="M1 8v7q2 8 11 10.500 7-2 9.500-6.500H9V4Q4 5 1 8z" fill="#1552cf" />
            <path d="M9.500 5h4.500v10.500h6V17q-1.500 3-5 3h-2q-3.500 0-3.500-4z" fill="#fff" />
          </Shield>
          <ToastBody>
            <ToastTitle>当前电脑内存使用率超过90%</ToastTitle>
            <ToastText>点击优化内存占用</ToastText>
          </ToastBody>
          <ToastTools>
            <svg width="13" height="3"><path d="M0 0.500h2v2H0zM5.500 0.500h2v2h-2zM11 0.500h2v2h-2z" fill="#888" /></svg>
            <svg width="13" height="13"><path d="M0.500 0.500l12 12M12.500 0.500l-12 12" stroke="#888" strokeWidth="1.200" /></svg>
          </ToastTools>
        </Toast>
        <SideHandle />
      </Desktop>
      <Simulink>
        <RibbonBar />
        <Main>
          <Rail $w={26} $pl={2}><RailTab $flip>模型浏览器</RailTab></Rail>
          <Editor>
            <TabStrip>
              <NavIcons><GrayArrow r={0} /><GrayArrow r={180} /><GrayArrow r={90} /></NavIcons>
              <ModelTab>rectifire_single_inverter_pv1</ModelTab>
              <TabStripEnd><svg width="16" height="10" viewBox="0 0 16 10"><rect x="0.500" y="0.500" width="15" height="9" fill="#ddd" stroke="#999" /><path d="M2 3h12M2 5.200h12" stroke="#888" strokeDasharray="1.500 0.800" /><path d="M4 7.500h8" stroke="#888" /></svg></TabStripEnd>
            </TabStrip>
            <EditorBody>
              <PaletteBar />
              <Work>
                <AddressBar>
                  <svg width="16" height="16" viewBox="0 0 16 16"><rect x="0.500" y="0.500" width="15" height="15" fill="#e9e9e9" stroke="#888" /><path d="M2.500 2.500l6 3.500-6 3.500z" fill="#2a7fb8" /><path d="M8 6h3v3" fill="none" stroke="#666" /><rect x="8.500" y="9" width="5" height="5" rx="1" fill="#d1491c" /></svg>
                  <AddressName>rectifire_single_inverter_pv1</AddressName>
                  <svg width="6" height="10"><path d="M0 0l6 5-6 5z" fill="#000" /></svg>
                  <Spacer />
                  <svg width="9" height="6"><path d="M0 0h9L4.500 6z" fill="#000" /></svg>
                </AddressBar>
                <AddressRule />
                <Diagram />
              </Work>
            </EditorBody>
          </Editor>
          <Rail $w={24} $pl={7}><RailTab>属性检查器</RailTab></Rail>
        </Main>
        <StatusBar>
          <StatusItem $w={771}>正在运行</StatusItem>
          <StatusItem $w={253} $link>查看诊断</StatusItem>
          <StatusItem $w={88}>80%</StatusItem>
          <StatusItem $w={65}>T=0.108</StatusItem>
          <Progress>2%</Progress>
          <Spacer />
          <StatusItem $w={60} $link $end>ode23tb</StatusItem>
        </StatusBar>
        <BottomEdge />
      </Simulink>
    </Screen>
  );
}
